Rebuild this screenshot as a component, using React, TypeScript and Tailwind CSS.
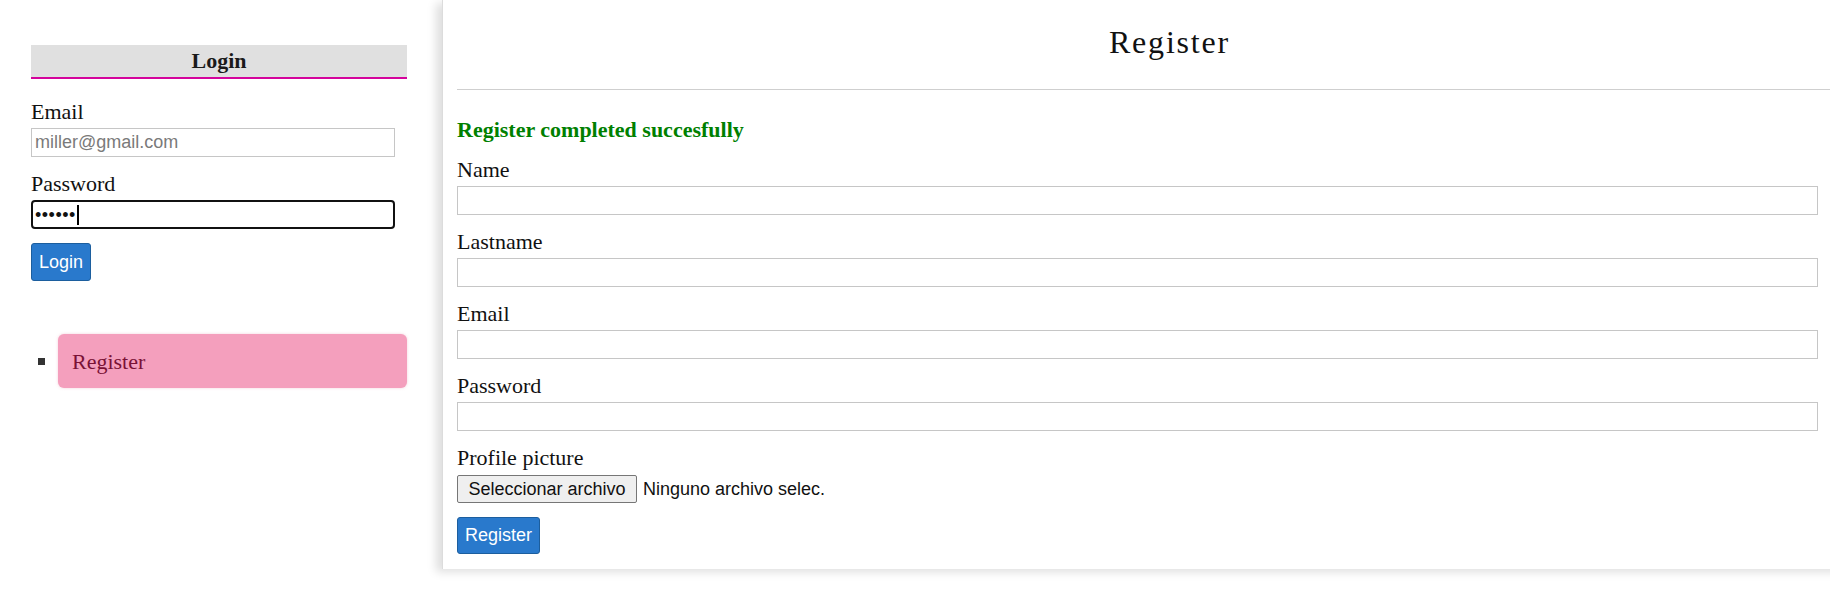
import React from "react";

function Field({ label }: { label: string }) {
  return (
    <div className="mb-[14px]">
      <label className="block">{label}</label>
      <input
        readOnly
        className="mt-[4px] block w-full h-[29px] border border-[#c6c6c6] bg-white px-[3px] font-['Liberation_Sans',Arial,sans-serif] text-[18px] outline-none"
      />
    </div>
  );
}

export default function App() {
  return (
    <div className="flex w-[1830px] h-[605px] overflow-hidden bg-white font-['Liberation_Serif','Times_New_Roman',serif] text-[22px] leading-[25px] text-[#111]">
      <aside className="w-[442px] shrink-0 pl-[31px] pr-[35px] pt-[45px]">
        <div className="bg-[#e0e0e0] border-b-2 border-[#d4049c] text-center font-bold pt-[3px] pb-[4px] text-[#1a1a1a]">
          Login
        </div>
        <label className="block mt-[20px]">Email</label>
        <input
          readOnly
          placeholder="miller@gmail.com"
          className="mt-[4px] block w-[364px] h-[29px] border border-[#c6c6c6] bg-white px-[3px] font-['Liberation_Sans',Arial,sans-serif] text-[18px] placeholder:text-[#7a7a7a] outline-none"
        />
        <label className="block mt-[14px]">Password</label>
        <div className="mt-[4px] flex items-center w-[364px] h-[29px] border-2 border-[#111] rounded-[4px] pl-[2px] font-['Liberation_Sans',Arial,sans-serif] text-[18px] leading-none">
          <span className="tracking-[0.5px]">••••••</span>
          <span className="ml-[1px] inline-block w-[2px] h-[20px] bg-black" />
        </div>
        <button className="mt-[14px] block h-[38px] px-[7px] rounded-[3px] border border-[#1c5e9e] bg-[#2979cc] text-white font-['Liberation_Sans',Arial,sans-serif] text-[18px]">
          Login
        </button>
        <ul className="mt-[53px]">
          <li className="flex items-center">
            <span className="ml-[7px] w-[7px] h-[7px] bg-[#333] shrink-0" />
            <a className="ml-[13px] flex items-center flex-1 h-[54px] pl-[14px] rounded-[6px] bg-[#f49fbd] text-[#7a1236] shadow-[0_0_3px_rgba(220,120,150,0.35)]">
              Register
            </a>
          </li>
        </ul>
      </aside>

      <main className="flex-1 -mr-[30px] self-start border-l border-[#dcdcdc] bg-white pl-[14px] pr-[42px] pt-[24px] pb-[15px] shadow-[-6px_3px_9px_rgba(0,0,0,0.13)]">
        <h1 className="text-center pl-[64px] text-[32px] leading-[37px] tracking-[1.8px] text-[#111]">
          Register
        </h1>
        <hr className="mt-[28px] -mr-[42px] border-0 h-px bg-[#cfcfcf]" />
        <div className="mt-[27px] font-bold text-[#008000]">Register completed succesfully</div>
        <div className="mt-[15px]">
          <Field label="Name" />
          <Field label="Lastname" />
          <Field label="Email" />
          <Field label="Password" />
          <label className="block">Profile picture</label>
          <div className="mt-[5px] flex items-center font-['Liberation_Sans',Arial,sans-serif] text-[18px] leading-none text-[#111]">
            <span className="h-[28px] w-[180px] flex items-center justify-center rounded-[2px] border border-[#767676] bg-[#efefef]">
              Seleccionar archivo
            </span>
            <span className="ml-[6px]">Ninguno archivo selec.</span>
          </div>
          <button className="mt-[14px] block h-[37px] px-[7px] rounded-[3px] border border-[#1c5e9e] bg-[#2979cc] text-white font-['Liberation_Sans',Arial,sans-serif] text-[18px]">
            Register
          </button>
        </div>
      </main>
    </div>
  );
}
